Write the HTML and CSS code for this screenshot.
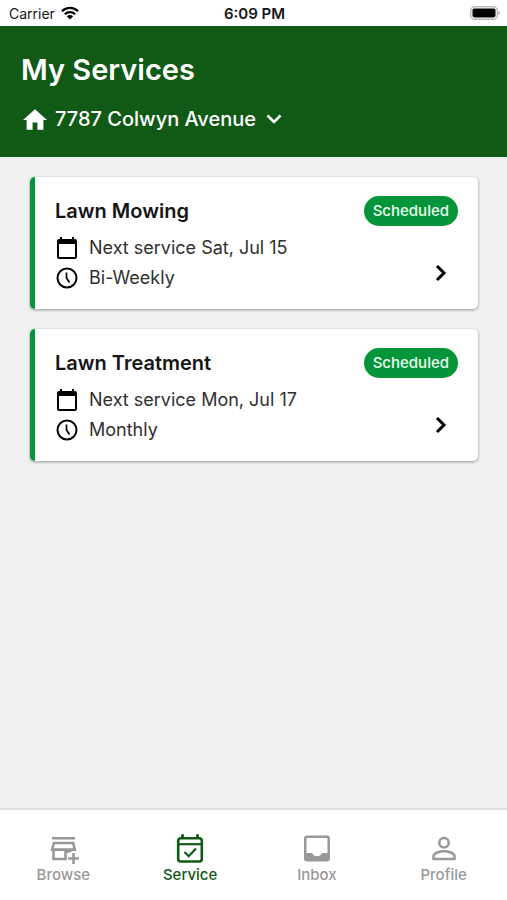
FILE: index.html
```html
<!DOCTYPE html>
<html lang="en">
<head>
<meta charset="utf-8">
<meta name="viewport" content="width=device-width, initial-scale=1">
<title>My Services</title>
<link rel="stylesheet" href="styles.css">
</head>
<body>
<div class="status-bar">
  <div class="carrier">
    <span>Carrier</span>
    <svg class="wifi" viewBox="0 0 18 14" aria-hidden="true"><path d="M1 5.2a11.4 11.4 0 0 1 16 0M3.8 8.2a7.4 7.4 0 0 1 10.400 0" fill="none" stroke="#000" stroke-width="2.300"/><path d="M9 13.500 5.800 10.300a4.600 4.600 0 0 1 6.400 0z"/></svg>
  </div>
  <time class="clock">6:09 PM</time>
  <svg class="battery" viewBox="0 0 30 14" aria-hidden="true"><rect x=".7" y=".7" width="26.600" height="12.600" rx="4" fill="#fff" stroke="#b9b9b9" stroke-width="1.400"/><rect x="2.500" y="2.500" width="23" height="9" rx="2"/><path d="M28.500 5v4q1.500-.6 1.500-2t-1.500-2z" fill="#aaa"/></svg>
</div>

<header class="header">
  <h1>My Services</h1>
  <button class="address" type="button">
    <svg class="home" viewBox="2 3 20 17" aria-hidden="true"><path d="M10 20v-6h4v6h5v-8h3L12 3 2 12h3v8z" fill="#fff"/></svg>
    <span>7787 Colwyn Avenue</span>
    <svg class="down" viewBox="0 0 16 10" aria-hidden="true"><path d="m1.500 1.500 6.500 6.500 6.500-6.500" fill="none" stroke="#fff" stroke-width="2.600"/></svg>
  </button>
</header>

<main class="services">
  <a class="card" href="#mowing">
    <div class="card-top">
      <h2>Lawn Mowing</h2>
      <span class="badge">Scheduled</span>
    </div>
    <div class="card-body">
      <div class="details">
        <p><svg class="detail-icon" viewBox="0 0 24 24" aria-hidden="true"><path d="M20 3h-1V1h-2v2H7V1H5v2H4a2 2 0 0 0-2 2v16a2 2 0 0 0 2 2h16a2 2 0 0 0 2-2V5a2 2 0 0 0-2-2zm0 18H4V8h16z"/></svg>Next service Sat, Jul 15</p>
        <p><svg class="detail-icon" viewBox="0 0 24 24" aria-hidden="true"><circle cx="12" cy="12" r="9.500" fill="none" stroke="#000" stroke-width="2"/><path d="M11.500 6.500V12l3 4.500" fill="none" stroke="#000" stroke-width="1.700"/></svg>Bi-Weekly</p>
      </div>
      <svg class="next" viewBox="0 0 12 18" aria-hidden="true"><path d="m2 2 7 7-7 7" fill="none" stroke="#000" stroke-width="3"/></svg>
    </div>
  </a>
  <a class="card" href="#treatment">
    <div class="card-top">
      <h2>Lawn Treatment</h2>
      <span class="badge">Scheduled</span>
    </div>
    <div class="card-body">
      <div class="details">
        <p><svg class="detail-icon" viewBox="0 0 24 24" aria-hidden="true"><path d="M20 3h-1V1h-2v2H7V1H5v2H4a2 2 0 0 0-2 2v16a2 2 0 0 0 2 2h16a2 2 0 0 0 2-2V5a2 2 0 0 0-2-2zm0 18H4V8h16z"/></svg>Next service Mon, Jul 17</p>
        <p><svg class="detail-icon" viewBox="0 0 24 24" aria-hidden="true"><circle cx="12" cy="12" r="9.500" fill="none" stroke="#000" stroke-width="2"/><path d="M11.500 6.500V12l3 4.500" fill="none" stroke="#000" stroke-width="1.700"/></svg>Monthly</p>
      </div>
      <svg class="next" viewBox="0 0 12 18" aria-hidden="true"><path d="m2 2 7 7-7 7" fill="none" stroke="#000" stroke-width="3"/></svg>
    </div>
  </a>
</main>

<nav class="tabs">
  <a href="#browse">
    <svg viewBox="0 0 30 30" aria-hidden="true"><g fill="none" stroke="#989898" stroke-width="2.600"><path d="M4 4.300h23M5.800 9h19.400l1.600 6.600H4.200zM5.500 15.500V25H17.500l0-9.500M17.500 18.500l7.500-3"/><path d="M25.500 19v11M20 24.500h11"/></g></svg>
    <span>Browse</span>
  </a>
  <a class="active" href="#service" aria-current="page">
    <svg viewBox="0 0 30 30" aria-hidden="true"><g fill="none" stroke="#0f5a16"><rect x="3.200" y="4.200" width="23.600" height="23.300" rx="2.500" stroke-width="2.600"/><path d="M3 10.200h24" stroke-width="2.200"/><path d="M7.500 .3v4M22.500 .3v4" stroke-width="2.800"/><path d="m9.500 18 4.200 4.200 7.300-7.700" stroke-width="2.200"/></g></svg>
    <span>Service</span>
  </a>
  <a href="#inbox">
    <svg viewBox="0 0 30 30" aria-hidden="true"><path fill="#989898" fill-rule="evenodd" d="M5 1.500h20q3 0 3 3v20q0 3-3 3H5q-3 0-3-3v-20q0-3 3-3zM4.500 4.500V19h5.700a5.200 5.200 0 0 0 9.600 0h5.700V4.500q0-.5-.5-.5H5q-.5 0-.5.500z"/></svg>
    <span>Inbox</span>
  </a>
  <a href="#profile">
    <svg viewBox="0 0 30 30" aria-hidden="true"><g fill="none" stroke="#989898" stroke-width="2.500"><circle cx="15" cy="8.800" r="4.700"/><path d="M4.500 24.900v-2.500c0-3.500 6.500-5.200 10.500-5.200s10.500 1.700 10.500 5.200v2.500z"/></g></svg>
    <span>Profile</span>
  </a>
</nav>
</body>
</html>
```

FILE: styles.css
```css
* {
  box-sizing: border-box;
}

body {
  margin: 0;
  min-height: 100vh;
  display: flex;
  flex-direction: column;
  background: #f0f0f0;
  color: #161616;
  font-family: Inter, "Liberation Sans", sans-serif;
}

h1, h2, p {
  margin: 0;
}

a {
  color: inherit;
  text-decoration: none;
}

svg {
  display: block;
  flex: none;
}

.status-bar {
  display: grid;
  grid-template-columns: 1fr auto 1fr;
  align-items: center;
  height: 26px;
  padding: 0 7px 0 9px;
  background: #fff;
  font-size: 14px;
}

.carrier {
  display: flex;
  align-items: center;
  gap: 6px;
}

.wifi {
  width: 18px;
  height: 14px;
}

.clock {
  font-size: 15px;
  font-weight: 600;
}

.battery {
  width: 30px;
  height: 14px;
  justify-self: end;
}

.header {
  padding: 24px 21px;
  background: #105a16;
  color: #fff;
}

.header h1 {
  font-size: 29px;
  line-height: 40px;
  font-weight: 600;
}

.address {
  display: flex;
  align-items: center;
  margin-top: 15px;
  padding: 0 2px;
  border: 0;
  background: none;
  color: inherit;
  font: 500 20px/28px Inter, "Liberation Sans", sans-serif;
}

.home {
  width: 24px;
  height: 21px;
  margin-right: 8px;
}

.down {
  width: 16px;
  height: 10px;
  margin-left: 10px;
}

.services {
  flex: 1;
  display: flex;
  flex-direction: column;
  gap: 20px;
  padding: 20px 29px 20px 30px;
}

.card {
  padding: 19px 20px 16px;
  border-left: 5px solid #04953a;
  border-radius: 5px;
  background: #fff;
  box-shadow: 0 1px 3px rgba(0, 0, 0, .4);
}

.card-top, .card-body {
  display: flex;
  align-items: center;
  justify-content: space-between;
}

.card-top {
  margin-bottom: 7px;
}

.card h2 {
  font-size: 20px;
  line-height: 30px;
  font-weight: 600;
}

.badge {
  padding: 0 9px;
  border-radius: 15px;
  background: #04953a;
  color: #e9ffee;
  font-size: 15px;
  line-height: 30px;
  font-weight: 500;
}

.details p {
  display: flex;
  align-items: center;
  gap: 10px;
  color: #303030;
  font-size: 18px;
  line-height: 30px;
}

.detail-icon {
  width: 24px;
  height: 24px;
}

.next {
  width: 12px;
  height: 18px;
  margin: 20px 11px 0 0;
}

.tabs {
  display: flex;
  height: 92px;
  padding-top: 24px;
  border-top: 2px solid #e0e0e0;
  background: #fff;
  color: #989898;
  font: 500 15px/22px Inter, "Liberation Sans", sans-serif;
}

.tabs a {
  flex: 1;
  display: flex;
  flex-direction: column;
  align-items: center;
}

.tabs svg {
  width: 30px;
  height: 30px;
  overflow: visible;
}

.tabs .active {
  color: #0f5a16;
}
```
